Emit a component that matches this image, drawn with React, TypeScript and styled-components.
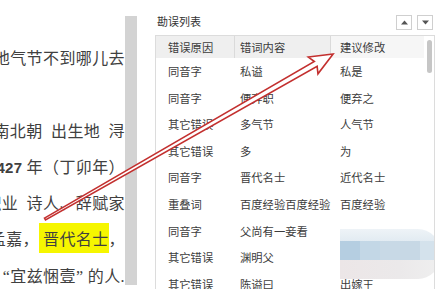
import React from "react";
import styled, { createGlobalStyle } from "styled-components";

const Global = createGlobalStyle`
  html, body { margin: 0; padding: 0; background: #fff; }
  body { width: 438px; height: 293px; overflow: hidden; }
`;

const Page = styled.div`
  position: relative;
  width: 438px;
  height: 293px;
  overflow: hidden;
  display: flex;
  background: #fff;
  font-family: "Noto Sans CJK SC", "Noto Sans", sans-serif;
`;

const Doc = styled.div`
  width: 125px;
  flex: none;
  padding-top: 39px;
  display: flex;
  flex-direction: column;
  font-size: 16px;
  letter-spacing: 0.4px;
  color: #404040;
`;

const Line = styled.div`
  height: 37.5px;
  line-height: 37.5px;
  display: flex;
  justify-content: flex-end;
  white-space: pre;
  overflow: hidden;
`;

const LineText = styled.span`
  flex: none;
`;

const Num = styled.span`
  font-family: "Liberation Sans", sans-serif;
  font-weight: 700;
  font-size: 15px;
`;

const Latin = styled.span`
  font-family: "Liberation Serif", serif;
`;

const Mark = styled.span`
  background: #f6f600;
  padding: 3px 0 3px 4px;
`;

const Divider = styled.div`
  width: 12px;
  flex: none;
  margin-top: 16px;
  height: 269px;
  background: #d3d3d3;
`;

const Panel = styled.div`
  flex: 1;
  display: flex;
  flex-direction: column;
  padding: 14px 3px 0 18px;
`;

const TitleRow = styled.div`
  height: 21px;
  flex: none;
  display: flex;
  justify-content: space-between;
  align-items: flex-start;
`;

const Title = styled.div`
  padding-left: 2px;
  font-size: 11px;
  line-height: 15px;
  color: #333;
`;

const Buttons = styled.div`
  display: flex;
  gap: 5px;
  margin: 1px 2px 0 0;
`;

const NavButton = styled.div`
  width: 16px;
  height: 15px;
  box-sizing: border-box;
  border: 1px solid #cfcfcf;
  background: #fff;
  display: flex;
  align-items: center;
  justify-content: center;
`;

const Table = styled.div`
  position: relative;
  width: 280px;
  height: 254px;
  box-sizing: border-box;
  border: 1px solid #dcdcdc;
  border-bottom: none;
  display: flex;
  overflow: hidden;
`;

const Grid = styled.div`
  width: 268px;
  display: flex;
  flex-direction: column;
`;

const Row = styled.div<{ $head?: boolean }>`
  display: grid;
  grid-template-columns: 79px 96px 93px;
  height: ${(p) => (p.$head ? "22px" : "26.6px")};
  flex: none;
`;

const Cell = styled.div<{ $pad: number; $head?: boolean; $bg?: string; $sep?: boolean }>`
  padding-left: ${(p) => p.$pad}px;
  font-size: 11.3px;
  line-height: ${(p) => (p.$head ? "22px" : "26.6px")};
  color: #3c3c3c;
  white-space: nowrap;
  overflow: hidden;
  background: ${(p) => p.$bg || "transparent"};
  border-right: ${(p) => (p.$sep ? "1px solid #dadada" : "none")};
`;

const Scroll = styled.div`
  width: 10px;
  flex: none;
  padding-top: 4px;
  display: flex;
  justify-content: center;
  background: #fff;
`;

const Thumb = styled.div`
  width: 5px;
  height: 33px;
  border-radius: 3px;
  background: #c6c6c6;
`;

const Blur = styled.div`
  position: absolute;
  left: 184px;
  top: 193px;
  width: 100px;
  height: 50px;
  border-radius: 0 22px 22px 0;
  overflow: hidden;
  display: flex;
  flex-direction: column;
`;

const BlurBand = styled.div<{ $h: number; $bg: string }>`
  height: ${(p) => p.$h}px;
  background: ${(p) => p.$bg};
  display: flex;
`;

const BlurBlock = styled.div<{ $c: string }>`
  flex: 1;
  background: ${(p) => p.$c};
`;

const ArrowLayer = styled.svg`
  position: absolute;
  left: 0;
  top: 0;
  pointer-events: none;
`;

const cols = [12, 5, 9];

const rows: [string, string, string][] = [
  ["同音字", "私谥", "私是"],
  ["同音字", "便弃职", "便弃之"],
  ["其它错误", "多气节", "人气节"],
  ["其它错误", "多", "为"],
  ["同音字", "晋代名士", "近代名士"],
  ["重叠词", "百度经验百度经验", "百度经验"],
  ["同音字", "父尚有一妾看", ""],
  ["其它错误", "渊明父", ""],
  ["其它错误", "陈谥曰", "出嫁王"],
];

const blurBlocks = ["#b5cee1", "#c3d7e6", "#c8d9e6", "#c7d8e5", "#d4e2ec"];

const Tri = ({ up }: { up?: boolean }) => (
  <svg width="7" height="5" viewBox="0 0 7 5">
    <polygon points={up ? "0,4.5 3.5,0.5 7,4.5" : "0,0.5 7,0.5 3.5,4.5"} fill="#555" />
  </svg>
);

export default function App() {
  const L = 332;
  return (
    <>
      <Global />
      <Page>
        <Doc>
          <Line>
            <LineText>地气节不到哪儿去</LineText>
          </Line>
          <Line />
          <Line>
            <LineText>南北朝{"\u2002"}出生地{"\u2002"}浔</LineText>
          </Line>
          <Line>
            <LineText>
              <Num>427</Num> 年（丁卯年）
            </LineText>
          </Line>
          <Line>
            <LineText>职业{"\u2002"}诗人、辞赋家</LineText>
          </Line>
          <Line>
            <LineText>
              孟嘉，<Mark>晋代名士</Mark>，
            </LineText>
          </Line>
          <Line>
            <LineText>
              <Latin>{"\u201C"}</Latin>宜兹悃壹<Latin>{"\u201D "}</Latin>的人<Latin>.</Latin>
            </LineText>
          </Line>
        </Doc>
        <Divider />
        <Panel>
          <TitleRow>
            <Title>勘误列表</Title>
            <Buttons>
              <NavButton>
                <Tri up />
              </NavButton>
              <NavButton>
                <Tri />
              </NavButton>
            </Buttons>
          </TitleRow>
          <Table>
            <Grid>
              <Row $head>
                <Cell $pad={cols[0]} $head $bg="#efefef" $sep>
                  错误原因
                </Cell>
                <Cell $pad={cols[1]} $head $bg="#efefef" $sep>
                  错词内容
                </Cell>
                <Cell $pad={cols[2]} $head $bg="#f6f6f6">
                  建议修改
                </Cell>
              </Row>
              {rows.map((r, i) => (
                <Row key={i}>
                  {r.map((t, j) => (
                    <Cell key={j} $pad={cols[j]}>
                      {t}
                    </Cell>
                  ))}
                </Row>
              ))}
            </Grid>
            <Scroll>
              <Thumb />
            </Scroll>
            <Blur>
              <BlurBand $h={12} $bg="linear-gradient(#eef3f7, #e2ebf2)" />
              <BlurBand $h={19} $bg="#c8d9e6">
                {blurBlocks.map((c, i) => (
                  <BlurBlock key={i} $c={c} />
                ))}
              </BlurBand>
              <BlurBand $h={19} $bg="linear-gradient(90deg, #ece6e7, #ebe9ea 60%, #efefef)" />
            </Blur>
          </Table>
        </Panel>
        <ArrowLayer width="438" height="293" viewBox="0 0 438 293">
          <g transform="translate(45 219) rotate(-29.8)">
            <polygon
              points={`0,-1 ${L - 20},-2.8 ${L - 23},-9.7 ${L},0 ${L - 23},9.7 ${L - 20},2.8 0,1`}
              fill="#fff"
              stroke="#c3302f"
              strokeWidth="1.6"
              strokeLinejoin="miter"
            />
          </g>
        </ArrowLayer>
      </Page>
    </>
  );
}
